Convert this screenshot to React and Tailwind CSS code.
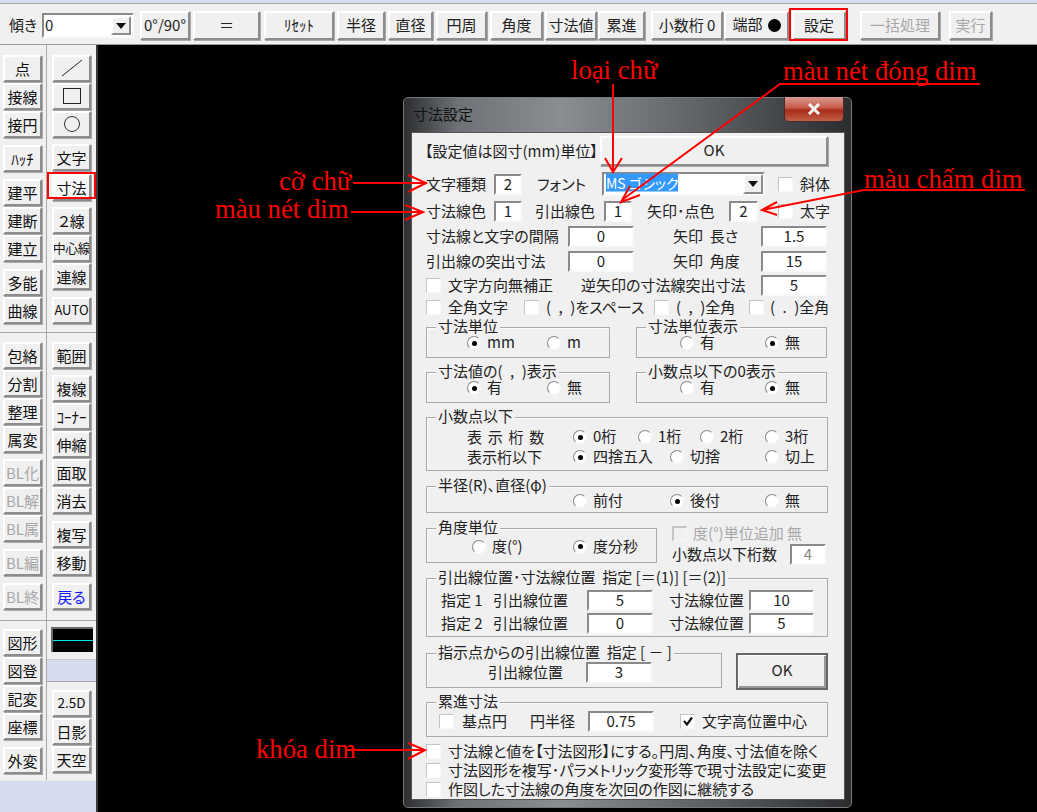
import React from "react";

const raised = "border-2 border-t-white border-l-white border-r-[#8c8c8c] border-b-[#8c8c8c] bg-[#f0f0f0] shadow-[1px_1px_0_#a8a8a8]";
const sunken = "border-2 border-t-[#8a8a8a] border-l-[#8a8a8a] border-r-[#f9f9f9] border-b-[#f9f9f9] bg-white";

function TopBtn({ w, ml = "", dis, children }) {
  return (
    <div className={`${w} ${ml} h-[29px] pb-[3px] flex items-center justify-center whitespace-nowrap shrink-0 ${raised} ${dis ? "text-[#a8a8a8]" : "text-[#222]"}`}>
      {children}
    </div>
  );
}

function SideBtn({ mt = "", dis, blue, hatch, children }) {
  const tone = dis ? "text-[#a8a8a8]" : blue ? "text-[#1a1aff]" : "text-[#111]";
  return (
    <div className={`${mt} w-[39px] h-[27px] pb-[1px] flex items-center justify-center whitespace-nowrap overflow-hidden text-[15px] ${raised} ${tone} ${hatch ? "bg-[#f8f8f8]" : ""}`}>
      {children}
    </div>
  );
}

function Input({ w, h = "h-[21px]", v, ml = "", gray }) {
  return (
    <div className={`${w} ${h} ${ml} pb-[2px] shrink-0 flex items-center justify-center ${sunken} ${gray ? "bg-[#f0f0f0] text-[#8a8a8a]" : "text-[#222]"}`}>
      {v}
    </div>
  );
}

function Check({ ml = "", checked, gray }) {
  return (
    <div className={`${ml} w-[15px] h-[15px] shrink-0 flex items-center justify-center border border-t-[#c4c4c4] border-l-[#c4c4c4] border-r-[#f8f8f8] border-b-[#f8f8f8] ${gray ? "bg-[#f0f0f0] border-t-[#8a8a8a] border-l-[#8a8a8a] border-t-2 border-l-2" : "bg-white"}`}>
      {checked && (
        <svg viewBox="0 0 12 12" className="w-[12px] h-[12px]">
          <path d="M2 6 L5 9.5 L10 2.5" fill="none" stroke="#111" strokeWidth="2.2" />
        </svg>
      )}
    </div>
  );
}

function Radio({ checked }) {
  return (
    <div className="w-[14px] h-[14px] shrink-0 rounded-full bg-white border border-t-[#8a8a8a] border-l-[#8a8a8a] border-r-[#f6f6f6] border-b-[#f6f6f6] flex items-center justify-center">
      {checked && <div className="w-[5px] h-[5px] rounded-full bg-black" />}
    </div>
  );
}

function RadioItem({ w, checked, children }) {
  return (
    <div className={`${w} flex items-center gap-[6px] whitespace-nowrap shrink-0`}>
      <Radio checked={checked} />
      <span className="leading-[14px]">{children}</span>
    </div>
  );
}

function Group({ cls, label, children }) {
  return (
    <div className={`relative border border-[#a9a9a9] shadow-[inset_1px_1px_0_#fbfbfb] ${cls}`}>
      <span className="absolute left-[9px] top-[-9px] h-[16px] leading-[16px] bg-[#f0f0f0] px-[2px] whitespace-nowrap">{label}</span>
      {children}
    </div>
  );
}

function Annot({ cls, children }) {
  return (
    <span className={`absolute font-['Liberation_Serif',serif] text-[26.7px] leading-[26px] text-[#ff0000] whitespace-nowrap [font-feature-settings:normal] ${cls}`}>
      {children}
    </span>
  );
}

export default function App() {
  return (
    <div className="relative w-[1037px] h-[812px] overflow-hidden bg-black font-['Noto_Sans_CJK_JP',sans-serif] text-[15px] leading-[17px] text-[#222] [font-feature-settings:'palt'] [&_span]:-translate-y-[1.5px] flex flex-col">
      {/* top strip */}
      <div className="h-[4px] shrink-0 bg-[#d5dcee] border-b border-[#a8a8a8]" />
      {/* toolbar */}
      <div className="h-[41px] shrink-0 bg-[#f0f0f0] border-b border-[#9a9a9a] flex items-start pt-[7px]">
        <span className="ml-[9px] w-[33px] h-[29px] leading-[29px] shrink-0">傾き</span>
        <div className={`w-[92px] h-[25px] mt-[2px] shrink-0 flex items-center justify-between pl-[1px] pr-[1px] ${sunken}`}>
          <span>0</span>
          <div className={`w-[20px] h-[19px] flex items-center justify-center ${raised} shadow-none`}>
            <svg viewBox="0 0 10 6" className="w-[10px] h-[6px]"><path d="M0 0H10L5 6Z" fill="#111" /></svg>
          </div>
        </div>
        <TopBtn w="w-[50px]" ml="ml-[6px]">0°/90°</TopBtn>
        <TopBtn w="w-[67px]" ml="ml-[3px]">＝</TopBtn>
        <TopBtn w="w-[70px]" ml="ml-[4px]">ﾘｾｯﾄ</TopBtn>
        <TopBtn w="w-[48px]" ml="ml-[3px]">半径</TopBtn>
        <TopBtn w="w-[45px]" ml="ml-[3px]">直径</TopBtn>
        <TopBtn w="w-[51px]" ml="ml-[3px]">円周</TopBtn>
        <TopBtn w="w-[53px]" ml="ml-[3px]">角度</TopBtn>
        <TopBtn w="w-[52px]" ml="ml-[2px]">寸法値</TopBtn>
        <TopBtn w="w-[47px]" ml="ml-[1px]">累進</TopBtn>
        <TopBtn w="w-[72px]" ml="ml-[6px]">小数桁 0</TopBtn>
        <TopBtn w="w-[65px]" ml="ml-[1px]">
          <span className="mr-[5px]">端部</span>
          <div className="w-[13px] h-[13px] mt-[2px] rounded-full bg-black" />
        </TopBtn>
        <TopBtn w="w-[54px]" ml="ml-[3px]">設定</TopBtn>
        <TopBtn w="w-[80px]" ml="ml-[14px]" dis>一括処理</TopBtn>
        <TopBtn w="w-[43px]" ml="ml-[9px]" dis>実行</TopBtn>
      </div>

      <div className="flex flex-1 min-h-0">
        {/* sidebar */}
        <div className="w-[98px] shrink-0 flex flex-col border-r-2 border-[#3a3a3a] bg-[#f0f0f0]">
          <div className="h-[288px] shrink-0 flex border-b border-[#a8a8a8]">
            <div className="w-[47px] shrink-0 pl-[3px] border-r border-[#a8a8a8] flex flex-col">
              <SideBtn mt="mt-[10px]">点</SideBtn>
              <SideBtn mt="mt-[1px]">接線</SideBtn>
              <SideBtn mt="mt-[1px]">接円</SideBtn>
              <SideBtn mt="mt-[7px]">ﾊｯﾁ</SideBtn>
              <SideBtn mt="mt-[7px]">建平</SideBtn>
              <SideBtn mt="mt-[1px]">建断</SideBtn>
              <SideBtn mt="mt-[1px]">建立</SideBtn>
              <SideBtn mt="mt-[7px]">多能</SideBtn>
              <SideBtn mt="mt-[1px]">曲線</SideBtn>
            </div>
            <div className="flex-1 pl-[5px] flex flex-col">
              <SideBtn mt="mt-[10px]">
                <svg viewBox="0 0 24 18" className="w-[24px] h-[18px]"><path d="M2 17 L22 1" stroke="#222" strokeWidth="1" fill="none" /></svg>
              </SideBtn>
              <SideBtn mt="mt-[1px]">
                <div className="w-[18px] h-[16px] border-[1.5px] border-[#222]" />
              </SideBtn>
              <SideBtn mt="mt-[1px]">
                <div className="w-[16px] h-[16px] rounded-full border-[1.5px] border-[#333]" />
              </SideBtn>
              <SideBtn mt="mt-[6px]">文字</SideBtn>
              <SideBtn mt="mt-[3px]" hatch>寸法</SideBtn>
              <SideBtn mt="mt-[6px]">２線</SideBtn>
              <SideBtn mt="mt-[1px]"><span className="text-[13px] tracking-[-0.5px]">中心線</span></SideBtn>
              <SideBtn mt="mt-[1px]">連線</SideBtn>
              <SideBtn mt="mt-[7px]"><span className="text-[13px]">AUTO</span></SideBtn>
            </div>
          </div>
          <div className="h-[288px] shrink-0 flex border-b border-[#a8a8a8]">
            <div className="w-[47px] shrink-0 pl-[3px] border-r border-[#a8a8a8] flex flex-col">
              <SideBtn mt="mt-[9px]">包絡</SideBtn>
              <SideBtn mt="mt-[1px]">分割</SideBtn>
              <SideBtn mt="mt-[1px]">整理</SideBtn>
              <SideBtn mt="mt-[1px]">属変</SideBtn>
              <SideBtn mt="mt-[6px]" dis>BL化</SideBtn>
              <SideBtn mt="mt-[1px]" dis>BL解</SideBtn>
              <SideBtn mt="mt-[1px]" dis>BL属</SideBtn>
              <SideBtn mt="mt-[7px]" dis>BL編</SideBtn>
              <SideBtn mt="mt-[7px]" dis>BL終</SideBtn>
            </div>
            <div className="flex-1 pl-[5px] flex flex-col">
              <SideBtn mt="mt-[9px]">範囲</SideBtn>
              <SideBtn mt="mt-[6px]">複線</SideBtn>
              <SideBtn mt="mt-[1px]">ｺｰﾅｰ</SideBtn>
              <SideBtn mt="mt-[1px]">伸縮</SideBtn>
              <SideBtn mt="mt-[1px]">面取</SideBtn>
              <SideBtn mt="mt-[1px]">消去</SideBtn>
              <SideBtn mt="mt-[7px]">複写</SideBtn>
              <SideBtn mt="mt-[1px]">移動</SideBtn>
              <SideBtn mt="mt-[7px]" blue>戻る</SideBtn>
            </div>
          </div>
          <div className="h-[159px] shrink-0 flex">
            <div className="w-[47px] shrink-0 pl-[3px] border-r border-[#a8a8a8] flex flex-col">
              <SideBtn mt="mt-[8px]">図形</SideBtn>
              <SideBtn mt="mt-[1px]">図登</SideBtn>
              <SideBtn mt="mt-[1px]">記変</SideBtn>
              <SideBtn mt="mt-[1px]">座標</SideBtn>
              <SideBtn mt="mt-[7px]">外変</SideBtn>
            </div>
            <div className="flex-1 flex flex-col">
              <div className="h-[39px] shrink-0 pl-[4px] pt-[6px] border-b border-[#c8c8c8]">
                <div className="w-[42px] h-[25px] bg-black border-t-2 border-l-2 border-[#6a6a6a] flex items-center">
                  <div className="w-full h-[1px] bg-[#00e5ee]" />
                </div>
              </div>
              <div className="h-[22px] shrink-0 bg-[#d5dcee] border-b border-[#a8a8a8]" />
              <div className="pl-[5px] flex flex-col">
                <SideBtn mt="mt-[8px]"><span className="text-[13.5px]">2.5D</span></SideBtn>
                <SideBtn mt="mt-[1px]">日影</SideBtn>
                <SideBtn mt="mt-[1px]">天空</SideBtn>
              </div>
            </div>
          </div>
          <div className="flex-1 bg-[#d5dcee] border-t border-[#e8e8e8]" />
        </div>
        <div className="flex-1 bg-black" />
      </div>

      {/* dialog window */}
      <div className="absolute left-[403px] top-[97px] w-[449px] h-[711px] rounded-[5px] border border-[#777] bg-[linear-gradient(90deg,#2c2e30_0%,#6e7276_12%,#8a8e92_35%,#5a5d60_70%,#2a2c2e_100%)] pl-[7px] pr-[6px] pb-[7px] flex flex-col">
        <div className="h-[34px] shrink-0 relative">
          <span className="absolute left-[2px] top-[5px] leading-[24px] text-[#111]">寸法設定</span>
          <div className="absolute right-[1px] top-[-1px] w-[60px] h-[25px] rounded-b-[5px] border border-[#4a2a2a] border-t-0 bg-[linear-gradient(180deg,#d89a90_0%,#c85a48_45%,#a82a18_55%,#c0604a_100%)] flex items-center justify-center">
            <svg viewBox="0 0 14 12" className="w-[14px] h-[12px]"><path d="M2 1 L12 11 M12 1 L2 11" stroke="#f2f2f2" strokeWidth="3" /></svg>
          </div>
        </div>
        <div className="flex-1 bg-[#f0f0f0] border border-[#555] flex flex-col pl-[14px] pr-[16px] pt-[3px]">
          <div className="h-[30px] flex items-center shrink-0">
            <span className="w-[175px] shrink-0 -ml-[1px] whitespace-nowrap">【設定値は図寸(mm)単位】</span>
            <div className={`w-[229px] h-[30px] flex items-center justify-center pb-[4px] ${raised}`}>OK</div>
          </div>
          <div className="h-[24px] mt-[6px] flex items-center shrink-0">
            <span className="w-[68px] shrink-0">文字種類</span>
            <Input w="w-[28px]" v="2" />
            <span className="ml-[15px] w-[65px] shrink-0">フォント</span>
            <div className={`w-[163px] h-[24px] shrink-0 flex items-center justify-between pl-[2px] ${sunken}`}>
              <span className="h-[18px] leading-[18px] w-[72px] bg-[#3399ff] text-white text-[14px] whitespace-nowrap translate-y-0">MS ゴシック</span>
              <div className={`w-[20px] h-[20px] flex items-center justify-center ${raised} shadow-none`}>
                <svg viewBox="0 0 10 6" className="w-[10px] h-[6px]"><path d="M0 0H10L5 6Z" fill="#111" /></svg>
              </div>
            </div>
            <Check ml="ml-[13px]" />
            <span className="ml-[7px] whitespace-nowrap">斜体</span>
          </div>
          <div className="h-[22px] mt-[4px] flex items-center shrink-0">
            <span className="w-[68px] shrink-0">寸法線色</span>
            <Input w="w-[28px]" v="1" />
            <span className="ml-[13px] w-[69px] shrink-0">引出線色</span>
            <Input w="w-[28px]" v="1" />
            <span className="ml-[15px] w-[82px] shrink-0 whitespace-nowrap">矢印･点色</span>
            <Input w="w-[29px]" v="2" />
            <Check ml="ml-[20px]" />
            <span className="ml-[7px] whitespace-nowrap">太字</span>
          </div>
          <div className="h-[22px] mt-[3px] flex items-center shrink-0">
            <span className="w-[142px] shrink-0 whitespace-nowrap">寸法線と文字の間隔</span>
            <Input w="w-[66px]" v="0" />
            <span className="ml-[39px] w-[88px] shrink-0 whitespace-nowrap">矢印&nbsp;&nbsp;長さ</span>
            <Input w="w-[66px]" v="1.5" />
          </div>
          <div className="h-[22px] mt-[3px] flex items-center shrink-0">
            <span className="w-[142px] shrink-0 whitespace-nowrap">引出線の突出寸法</span>
            <Input w="w-[66px]" v="0" />
            <span className="ml-[39px] w-[88px] shrink-0 whitespace-nowrap">矢印&nbsp;&nbsp;角度</span>
            <Input w="w-[66px]" v="15" />
          </div>
          <div className="h-[22px] mt-[2px] flex items-center shrink-0">
            <Check />
            <span className="ml-[7px] w-[133px] shrink-0 whitespace-nowrap">文字方向無補正</span>
            <span className="w-[180px] shrink-0 whitespace-nowrap">逆矢印の寸法線突出寸法</span>
            <Input w="w-[66px]" v="5" />
          </div>
          <div className="h-[20px] mt-[1px] flex items-center shrink-0">
            <Check />
            <span className="ml-[7px] w-[76px] shrink-0 whitespace-nowrap">全角文字</span>
            <Check />
            <span className="ml-[7px] w-[108px] shrink-0 whitespace-nowrap">(&ensp;,&ensp;)をスペース</span>
            <Check />
            <span className="ml-[7px] w-[73px] shrink-0 whitespace-nowrap">(&ensp;,&ensp;)全角</span>
            <Check />
            <span className="ml-[6px] whitespace-nowrap">(&ensp;.&ensp;)全角</span>
          </div>

          <div className="flex mt-[10px] shrink-0">
            <Group cls="w-[184px] h-[31px] flex items-center pl-[40px] pt-[1px]" label="寸法単位">
              <RadioItem w="w-[80px]" checked>mm</RadioItem>
              <RadioItem w="w-[50px]">m</RadioItem>
            </Group>
            <Group cls="ml-[26px] w-[191px] h-[31px] flex items-center pl-[43px] pt-[1px]" label="寸法単位表示">
              <RadioItem w="w-[85px]">有</RadioItem>
              <RadioItem w="w-[50px]" checked>無</RadioItem>
            </Group>
          </div>
          <div className="flex mt-[14px] shrink-0">
            <Group cls="w-[184px] h-[31px] flex items-center pl-[40px] pt-[1px]" label={<>寸法値の(&ensp;,&ensp;)表示</>}>
              <RadioItem w="w-[80px]" checked>有</RadioItem>
              <RadioItem w="w-[50px]">無</RadioItem>
            </Group>
            <Group cls="ml-[26px] w-[191px] h-[31px] flex items-center pl-[43px] pt-[1px]" label="小数点以下の0表示">
              <RadioItem w="w-[85px]">有</RadioItem>
              <RadioItem w="w-[50px]" checked>無</RadioItem>
            </Group>
          </div>
          <Group cls="mt-[14px] w-[402px] h-[54px] shrink-0 flex flex-col pl-[40px] pt-[9px]" label="小数点以下">
            <div className="flex items-center h-[20px]">
              <span className="w-[106px] shrink-0 tracking-[1.2px] whitespace-nowrap">表 示 桁 数</span>
              <RadioItem w="w-[65px]" checked>0桁</RadioItem>
              <RadioItem w="w-[62px]">1桁</RadioItem>
              <RadioItem w="w-[65px]">2桁</RadioItem>
              <RadioItem w="w-[50px]">3桁</RadioItem>
            </div>
            <div className="flex items-center h-[20px]">
              <span className="w-[106px] shrink-0 whitespace-nowrap">表示桁以下</span>
              <RadioItem w="w-[97px]" checked>四捨五入</RadioItem>
              <RadioItem w="w-[95px]">切捨</RadioItem>
              <RadioItem w="w-[50px]">切上</RadioItem>
            </div>
          </Group>
          <Group cls="mt-[15px] w-[402px] h-[27px] shrink-0 flex items-center pl-[146px] pt-[3px]" label="半径(R)、直径(φ)">
            <RadioItem w="w-[97px]">前付</RadioItem>
            <RadioItem w="w-[95px]" checked>後付</RadioItem>
            <RadioItem w="w-[50px]">無</RadioItem>
          </Group>
          <div className="flex mt-[15px] h-[35px] shrink-0">
            <Group cls="w-[231px] h-[35px] shrink-0 flex items-center pl-[45px] pt-[2px]" label="角度単位">
              <RadioItem w="w-[101px]">度(°)</RadioItem>
              <RadioItem w="w-[70px]" checked>度分秒</RadioItem>
            </Group>
            <div className="ml-[15px] flex flex-col -mt-[3px] h-[38px]">
              <div className="flex items-center h-[17px]">
                <Check gray />
                <span className="ml-[6px] text-[#a8a8a8] whitespace-nowrap">度(°)単位追加 無</span>
              </div>
              <div className="flex items-center h-[21px] mt-[2px]">
                <span className="w-[118px] shrink-0 whitespace-nowrap">小数点以下桁数</span>
                <Input w="w-[36px]" v="4" gray />
              </div>
            </div>
          </div>
          <Group cls="mt-[15px] w-[402px] h-[59px] shrink-0 flex flex-col pl-[14px] pt-[10px]" label={<>引出線位置･寸法線位置&nbsp;&nbsp;指定 [＝(1)] [＝(2)]</>}>
            <div className="flex items-center h-[22px]">
              <span className="w-[52px] shrink-0 whitespace-nowrap">指定 1</span>
              <span className="w-[94px] shrink-0 whitespace-nowrap">引出線位置</span>
              <Input w="w-[66px]" v="5" />
              <span className="ml-[16px] w-[80px] shrink-0 whitespace-nowrap">寸法線位置</span>
              <Input w="w-[65px]" v="10" />
            </div>
            <div className="flex items-center h-[22px] mt-[1px]">
              <span className="w-[52px] shrink-0 whitespace-nowrap">指定 2</span>
              <span className="w-[94px] shrink-0 whitespace-nowrap">引出線位置</span>
              <Input w="w-[66px]" v="0" />
              <span className="ml-[16px] w-[80px] shrink-0 whitespace-nowrap">寸法線位置</span>
              <Input w="w-[65px]" v="5" />
            </div>
          </Group>
          <div className="flex mt-[16px] shrink-0">
            <Group cls="w-[296px] h-[35px] shrink-0 flex items-center pl-[61px] pt-[3px]" label={<>指示点からの引出線位置&nbsp;&nbsp;指定 [&nbsp;－&nbsp;]</>}>
              <span className="w-[98px] shrink-0 whitespace-nowrap">引出線位置</span>
              <Input w="w-[66px]" v="3" />
            </Group>
            <div className="ml-[14px] w-[93px] h-[37px] flex items-center justify-center border-2 border-[#666] shadow-[inset_1px_1px_0_#fff,inset_-2px_-2px_0_#999] pb-[4px]">OK</div>
          </div>
          <Group cls="mt-[12px] w-[402px] h-[35px] shrink-0 flex items-center pl-[12px] pt-[3px]" label="累進寸法">
            <Check />
            <span className="ml-[8px] w-[68px] shrink-0 whitespace-nowrap">基点円</span>
            <span className="w-[58px] shrink-0 whitespace-nowrap">円半径</span>
            <Input w="w-[66px]" v="0.75" />
            <Check ml="ml-[26px]" checked />
            <span className="ml-[7px] whitespace-nowrap">文字高位置中心</span>
          </Group>
          <div className="mt-[5px] h-[19px] flex items-center shrink-0 whitespace-nowrap">
            <Check /><span className="ml-[7px]">寸法線と値を【寸法図形】にする。円周、角度、寸法値を除く</span>
          </div>
          <div className="h-[19px] flex items-center shrink-0 whitespace-nowrap">
            <Check /><span className="ml-[7px]">寸法図形を複写･パラメトリック変形等で現寸法設定に変更</span>
          </div>
          <div className="h-[19px] flex items-center shrink-0 whitespace-nowrap">
            <Check /><span className="ml-[7px]">作図した寸法線の角度を次回の作図に継続する</span>
          </div>
        </div>
      </div>

      {/* annotation highlights */}
      <div className="absolute left-[789px] top-[8px] w-[59px] h-[33px] border-[2px] border-[#ff0000]" />
      <div className="absolute left-[47px] top-[172px] w-[49px] h-[27px] border-[2px] border-[#ff0000]" />

      <svg className="absolute left-0 top-0 w-[1037px] h-[812px] pointer-events-none" viewBox="0 0 1037 812" fill="none" stroke="#ff0000" strokeWidth="2">
        <path d="M613 84 L613 172 M605 158 L613 172 L622 158" />
        <path d="M980 84 L780 84 L622 200 M630 186 L621 202 L640 195" />
        <path d="M1025 190 L864 190 L762 210 M777 202 L762 210 L777 215" />
        <path d="M353 183 L426 183 M408 175 L426 183 L408 192" />
        <path d="M351 212 L423 212 M405 205 L423 212 L405 220" />
        <path d="M345 750 L425 750 M408 743 L425 750 L408 759" />
      </svg>
      <Annot cls="left-[571px] top-[58px]">loại chữ</Annot>
      <Annot cls="left-[783px] top-[59px]">màu nét đóng dim</Annot>
      <Annot cls="left-[864px] top-[167px]">màu chấm dim</Annot>
      <Annot cls="left-[279px] top-[169px]">cỡ chữ</Annot>
      <Annot cls="left-[215px] top-[197px]">màu nét dim</Annot>
      <Annot cls="left-[256px] top-[737px]">khóa dim</Annot>
    </div>
  );
}
